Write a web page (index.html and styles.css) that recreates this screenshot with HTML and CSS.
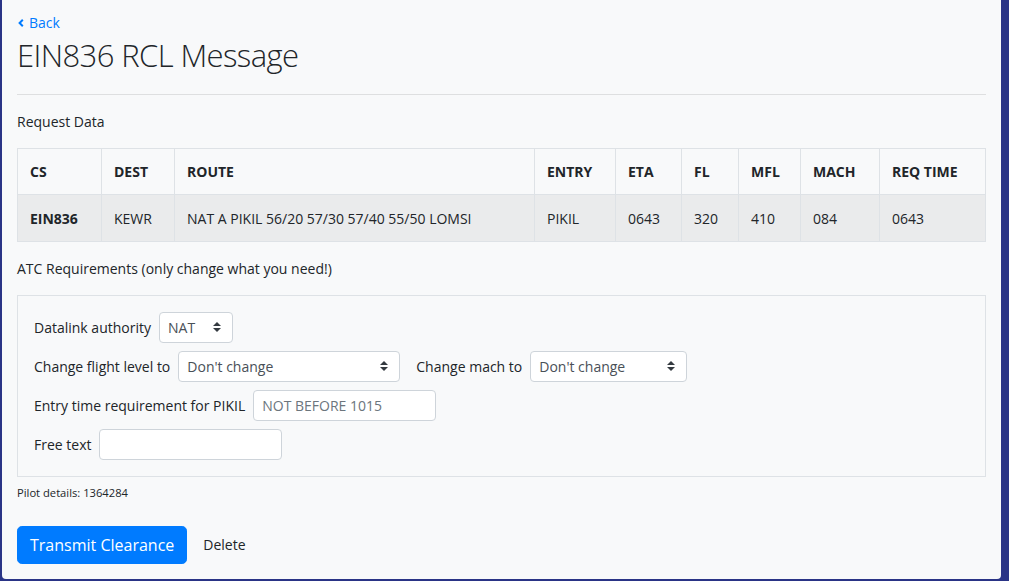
FILE: index.html
```html
<!DOCTYPE html>
<html lang="en">
<head>
<meta charset="utf-8">
<title>EIN836 RCL Message</title>
<link rel="stylesheet" href="styles.css">
</head>
<body>
<main class="panel">
  <a class="back" href="#">
    <svg class="back-icon" width="6" height="8" viewBox="0 0 6 8" aria-hidden="true"><path d="M4.8 0.8 L1.6 4 L4.8 7.2" fill="none" stroke="currentColor" stroke-width="2"/></svg>
    <span>Back</span>
  </a>
  <h1 class="title">EIN836 RCL Message</h1>
  <hr class="rule">
  <p class="section-label">Request Data</p>
  <table class="data-table">
    <colgroup>
      <col class="c-cs"><col class="c-dest"><col class="c-route"><col class="c-entry"><col class="c-eta"><col class="c-fl"><col class="c-mfl"><col class="c-mach"><col class="c-req">
    </colgroup>
    <thead>
      <tr><th>CS</th><th>DEST</th><th>ROUTE</th><th>ENTRY</th><th>ETA</th><th>FL</th><th>MFL</th><th>MACH</th><th>REQ TIME</th></tr>
    </thead>
    <tbody>
      <tr class="row-active"><th>EIN836</th><td>KEWR</td><td>NAT A PIKIL 56/20 57/30 57/40 55/50 LOMSI</td><td>PIKIL</td><td>0643</td><td>320</td><td>410</td><td>084</td><td>0643</td></tr>
    </tbody>
  </table>
  <p class="section-label">ATC Requirements (only change what you need!)</p>
  <form class="req-box">
    <div class="form-row">
      <label class="field-label" for="auth">Datalink authority</label>
      <div class="select-wrap w-auth">
        <select id="auth" class="control select"><option>NAT</option></select>
        <svg class="caret" width="8" height="10" viewBox="0 0 4 5" aria-hidden="true"><path d="M2 0L0 2h4zm0 5L0 3h4z" fill="#343a40"/></svg>
      </div>
    </div>
    <div class="form-row">
      <label class="field-label" for="fl">Change flight level to</label>
      <div class="select-wrap w-fl">
        <select id="fl" class="control select"><option>Don't change</option></select>
        <svg class="caret" width="8" height="10" viewBox="0 0 4 5" aria-hidden="true"><path d="M2 0L0 2h4zm0 5L0 3h4z" fill="#343a40"/></svg>
      </div>
      <label class="field-label group-gap" for="mach">Change mach to</label>
      <div class="select-wrap w-mach">
        <select id="mach" class="control select"><option>Don't change</option></select>
        <svg class="caret" width="8" height="10" viewBox="0 0 4 5" aria-hidden="true"><path d="M2 0L0 2h4zm0 5L0 3h4z" fill="#343a40"/></svg>
      </div>
    </div>
    <div class="form-row">
      <label class="field-label" for="entry">Entry time requirement for PIKIL</label>
      <input id="entry" class="control w-text" type="text" placeholder="NOT BEFORE 1015">
    </div>
    <div class="form-row">
      <label class="field-label" for="free">Free text</label>
      <input id="free" class="control w-text" type="text">
    </div>
  </form>
  <p class="pilot"><small>Pilot details: 1364284</small></p>
  <div class="actions">
    <button class="btn-primary" type="button">Transmit Clearance</button>
    <button class="btn-plain" type="button">Delete</button>
  </div>
</main>
</body>
</html>
```
FILE: styles.css
```css
html, body {
  margin: 0;
  padding: 0;
  height: 100%;
}
body {
  background: #2a3486;
  font-family: "Open Sans", "Liberation Sans", sans-serif;
  font-size: 14px;
  line-height: 1.5;
  color: #212529;
  display: flex;
  padding: 0 9px 2px 2px;
  box-sizing: border-box;
  overflow: hidden;
}
.panel {
  flex: 1;
  background: #f8f9fa;
  border-radius: 0 0 4px 4px;
  padding: 12px 15px 0 15px;
  display: flex;
  flex-direction: column;
  align-items: flex-start;
}
.back {
  color: #007bff;
  text-decoration: none;
  display: inline-flex;
  align-items: center;
  gap: 5px;
  height: 21px;
  padding-left: 1px;
}
.back-icon {
  display: block;
  margin-top: 1px;
}
.title {
  font-size: 31px;
  font-weight: 300;
  letter-spacing: -0.6px;
  line-height: 1.2;
  margin: 4px 0 0 0;
}
.rule {
  align-self: stretch;
  border: 0;
  border-top: 1px solid rgba(0, 0, 0, 0.1);
  margin: 20px 0 16px 0;
}
.section-label {
  margin: 0;
}
.data-table {
  align-self: stretch;
  border-collapse: collapse;
  table-layout: fixed;
  width: 100%;
  margin: 16px 0;
}
.data-table th, .data-table td {
  border: 1px solid #dee2e6;
  padding: 12px;
  text-align: left;
  vertical-align: top;
  line-height: 21px;
  white-space: nowrap;
}
.data-table tbody th, .data-table tbody td {
  padding-top: 13px;
}
.data-table th { font-weight: 700; }
.data-table thead th { background: #f8f9fa; }
.row-active th, .row-active td { background: #eaebec; }
.c-cs { width: 84px; }
.c-dest { width: 73px; }
.c-route { width: 360px; }
.c-entry { width: 81px; }
.c-eta { width: 66px; }
.c-fl { width: 57px; }
.c-mfl { width: 62px; }
.c-mach { width: 79px; }
.c-req { width: 106px; }
.req-box {
  align-self: stretch;
  margin: 16px 0 0 0;
  border: 1px solid #dee2e6;
  padding: 16px;
  display: flex;
  flex-direction: column;
  gap: 8px;
}
.form-row {
  display: flex;
  align-items: center;
}
.field-label {
  margin-right: 8px;
}
.group-gap {
  margin-left: 16px;
}
.control {
  box-sizing: border-box;
  height: 31px;
  border: 1px solid #ced4da;
  border-radius: 4px;
  background: #fff;
  font-family: inherit;
  font-size: 14px;
  color: #495057;
  padding: 0 8px;
  margin: 0;
}
.control::placeholder { color: #6c757d; }
.select-wrap {
  position: relative;
  display: flex;
}
.select {
  appearance: none;
  -webkit-appearance: none;
  width: 100%;
  padding-right: 28px;
}
.caret {
  position: absolute;
  right: 12px;
  top: 10px;
  pointer-events: none;
}
.w-auth { width: 74px; }
.w-fl { width: 222px; }
.w-mach { width: 157px; }
.w-text { width: 183px; }
.pilot {
  margin: 4px 0 0 0;
  line-height: 21px;
}
.pilot small { font-size: 11.2px; }
.actions {
  display: flex;
  align-items: center;
  gap: 4px;
  margin-top: 23px;
}
.btn-primary {
  font-family: inherit;
  font-size: 16px;
  line-height: 24px;
  height: 38px;
  padding: 0 12px;
  color: #fff;
  background: #007bff;
  border: 1px solid #007bff;
  border-radius: 4.8px;
}
.btn-plain {
  font-family: inherit;
  font-size: 14px;
  color: #212529;
  background: none;
  border: 0;
  padding: 0 12px;
  line-height: 24px;
}
```
